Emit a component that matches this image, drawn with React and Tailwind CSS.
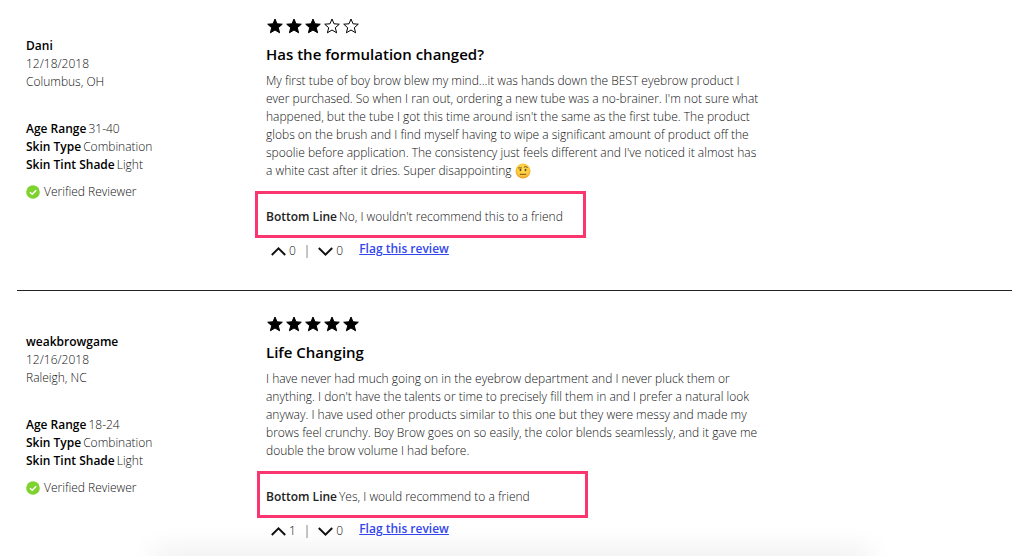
import { useId } from "react";

const reviews = [
  {
    name: "Dani",
    date: "12/18/2018",
    place: "Columbus, OH",
    age: "31-40",
    stars: 3,
    title: "Has the formulation changed?",
    lines: [
      "My first tube of boy brow blew my mind...it was hands down the BEST eyebrow product I",
      "ever purchased. So when I ran out, ordering a new tube was a no-brainer. I'm not sure what",
      "happened, but the tube I got this time around isn't the same as the first tube. The product",
      "globs on the brush and I find myself having to wipe a significant amount of product off the",
      "spoolie before application. The consistency just feels different and I've noticed it almost has",
      "a white cast after it dries. Super disappointing",
    ],
    face: true,
    verdict: "No, I wouldn't recommend this to a friend",
    up: 0,
    down: 0,
    articleClass: "pt-[19px] pb-[26px] border-b border-[#222]",
    asideClass: "pt-[18px]",
    boxClass: "-ml-[11px] pl-2",
  },
  {
    name: "weakbrowgame",
    date: "12/16/2018",
    place: "Raleigh, NC",
    age: "18-24",
    stars: 5,
    title: "Life Changing",
    lines: [
      "I have never had much going on in the eyebrow department and I never pluck them or",
      "anything. I don't have the talents or time to precisely fill them in and I prefer a natural look",
      "anyway. I have used other products similar to this one but they were messy and made my",
      "brows feel crunchy. Boy Brow goes on so easily, the color blends seamlessly, and it gave me",
      "double the brow volume I had before.",
    ],
    face: false,
    verdict: "Yes, I would recommend to a friend",
    up: 1,
    down: 0,
    articleClass: "pt-[26px]",
    asideClass: "pt-4",
    boxClass: "-ml-[9px] pl-[6px]",
  },
];

function Star({ filled }) {
  return (
    <svg className="h-4 w-4" viewBox="0 0 16 16" aria-hidden="true">
      <path
        d="M8 1 10 5.800l5.300.4-4 3.500 1.300 5.100L8 12l-4.600 2.800 1.300-5.100-4-3.500 5.300-.4z"
        fill={filled ? "#000" : "none"}
        stroke="#000"
        strokeWidth="1"
        strokeLinejoin="round"
      />
    </svg>
  );
}

function Chevron({ down }) {
  return (
    <svg className="h-[9px] w-[15px]" viewBox="0 0 15 9" aria-hidden="true">
      <path
        d={down ? "M.8 1 7.500 7.600 14.200 1" : "M.8 8 7.500 1.400 14.200 8"}
        fill="none"
        stroke="#111"
        strokeWidth="2"
      />
    </svg>
  );
}

function Check() {
  return (
    <svg className="h-[14px] w-[14px]" viewBox="0 0 14 14" aria-hidden="true">
      <circle cx="7" cy="7" r="6.800" fill="#7ed32f" />
      <path d="M4 7.200 6.200 9.200 10.200 5.200" fill="none" stroke="#fff" strokeWidth="1.400" />
    </svg>
  );
}

function RaisedBrowFace() {
  const id = useId();
  return (
    <svg className="inline-block h-4 w-4 align-[-4px]" viewBox="0 0 16 16" role="img" aria-label="Raised eyebrow face">
      <defs>
        <radialGradient id={id} cx="50%" cy="40%" r="60%">
          <stop offset="0" stopColor="#ffe35c" />
          <stop offset="0.7" stopColor="#fcc63a" />
          <stop offset="1" stopColor="#e89a2c" />
        </radialGradient>
      </defs>
      <circle cx="8" cy="8" r="7.500" fill={`url(#${id})`} />
      <ellipse cx="5.500" cy="7" rx=".9" ry="1.200" fill="#6b4410" />
      <ellipse cx="10.500" cy="7" rx=".9" ry="1.200" fill="#6b4410" />
      <path d="M3.500 4.900h3M9.200 4q1.600-1.100 3.200.3M5.300 11.300h5.400" fill="none" stroke="#6b4410" strokeWidth=".9" strokeLinecap="round" />
    </svg>
  );
}

function Review({ review: r }) {
  return (
    <article className={`grid grid-cols-[240px_1fr] pl-[9px] ${r.articleClass}`}>
      <aside className={`leading-[18px] ${r.asideClass}`}>
        <p className="font-semibold text-black">{r.name}</p>
        <p>{r.date}</p>
        <p>{r.place}</p>
        <dl className="mt-[29px]">
          {[["Age Range", r.age], ["Skin Type", "Combination"], ["Skin Tint Shade", "Light"]].map(([k, v]) => (
            <div key={k} className="flex gap-[2px]">
              <dt className="font-semibold text-black">{k}</dt>
              <dd>{v}</dd>
            </div>
          ))}
        </dl>
        <p className="mt-[9px] flex items-center gap-1">
          <Check />
          Verified Reviewer
        </p>
      </aside>
      <div>
        <div className="flex h-[14px] items-center gap-[3px] pl-[1px]" role="img" aria-label={`${r.stars} out of 5 stars`}>
          {[1, 2, 3, 4, 5].map((n) => (
            <Star key={n} filled={n <= r.stars} />
          ))}
        </div>
        <h2 className="mt-[11px] text-[15px] leading-5 font-semibold text-black">{r.title}</h2>
        <p className="mt-2 leading-[18px]">
          {r.lines.map((line, i) => (
            <span key={line} className="block h-[18px] whitespace-nowrap">
              {line}
              {r.face && i === r.lines.length - 1 && <> <RaisedBrowFace /></>}
            </span>
          ))}
        </p>
        <p className={`mt-[11px] flex h-[47px] w-[331px] items-center gap-[2px] border-3 border-[#fb3570] pt-1 whitespace-nowrap ${r.boxClass}`}>
          <strong className="font-semibold text-[#222]">Bottom Line</strong>
          {r.verdict}
        </p>
        <div className="flex h-[26px] items-center pl-[5px]">
          <button type="button" className="flex items-center gap-[3px]" aria-label={`Helpful ${r.up}`}>
            <Chevron />
            {r.up}
          </button>
          <span className="px-2">|</span>
          <button type="button" className="flex items-center gap-[3px]" aria-label={`Not helpful ${r.down}`}>
            <Chevron down />
            {r.down}
          </button>
          <a href="#flag" className="ml-4 pb-1 font-semibold text-[#3347ee] underline">
            Flag this review
          </a>
        </div>
      </div>
    </article>
  );
}

export default function App() {
  return (
    <main className="overflow-hidden bg-white pr-3 pl-[17px] font-['Open_Sans',sans-serif] text-[12px] font-light text-[#111]">
      {reviews.map((r) => (
        <Review key={r.name} review={r} />
      ))}
      <div className="pointer-events-none fixed inset-x-[16%] bottom-0 h-0 shadow-[0_6px_30px_10px_rgba(0,0,0,0.09)]" />
    </main>
  );
}
